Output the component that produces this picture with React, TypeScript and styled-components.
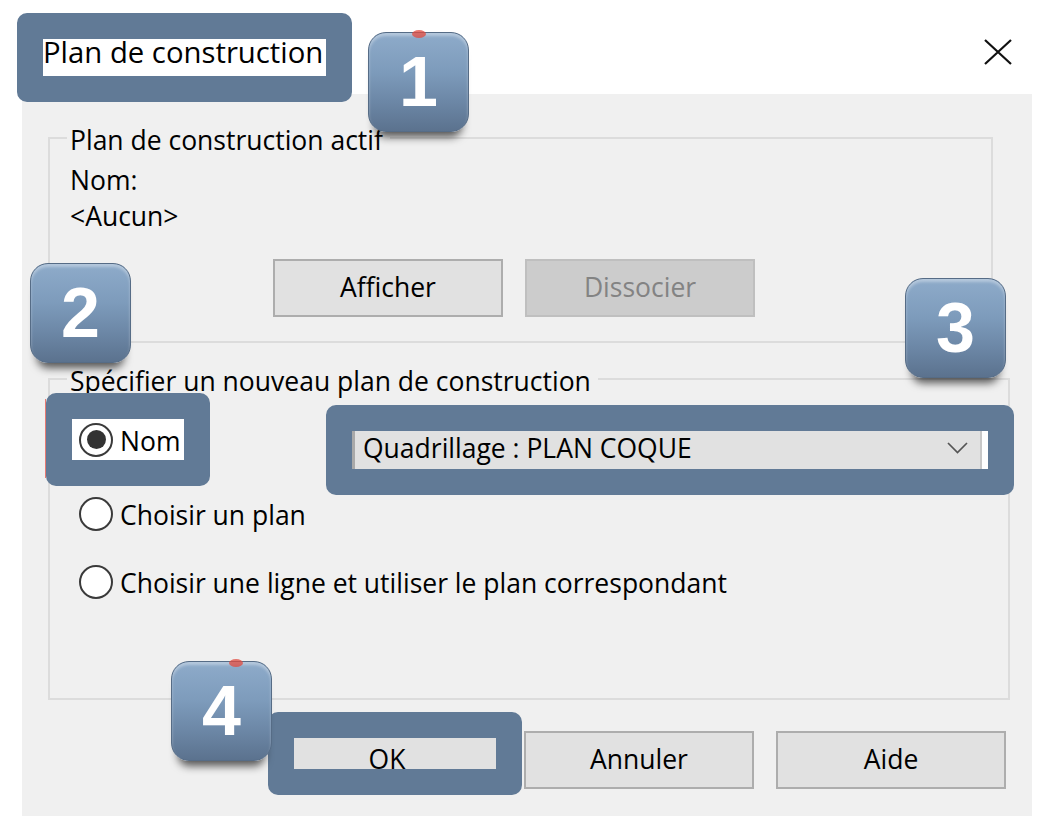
import styled, { createGlobalStyle } from "styled-components";

const GlobalStyle = createGlobalStyle`
  html, body {
    margin: 0;
    padding: 0;
    background: #ffffff;
  }
  * {
    box-sizing: border-box;
  }
`;

const Screen = styled.div`
  position: relative;
  width: 1038px;
  height: 836px;
  overflow: hidden;
  background: #ffffff;
  color: #000000;
  font-family: "Open Sans", "Noto Sans", sans-serif;
  font-size: 26.5px;
`;

const TitleBar = styled.header`
  height: 94px;
  display: flex;
  align-items: flex-start;
  justify-content: space-between;
  padding: 39px 26px 0 43px;
`;

const Spot = styled.div<{ $fill?: string }>`
  position: relative;
  background: ${(p) => p.$fill ?? "transparent"};
`;

// dark annotation frame; the hole in the middle shows the control below
const Callout = styled.span<{ $t?: number; $r?: number; $b?: number; $l?: number; $red?: boolean }>`
  position: absolute;
  top: ${(p) => p.$t ?? -26}px;
  right: ${(p) => p.$r ?? -26}px;
  bottom: ${(p) => p.$b ?? -26}px;
  left: ${(p) => p.$l ?? -26}px;
  border: 26px solid #617a96;
  border-radius: 10px;
  pointer-events: none;
  z-index: 2;
  &::before {
    content: "";
    display: ${(p) => (p.$red ? "block" : "none")};
    position: absolute;
    left: -27px;
    top: -20px;
    bottom: -18px;
    width: 1px;
    background: rgba(226, 70, 60, 0.7);
  }
`;

const TitleText = styled.div`
  margin-top: 1px;
  height: 36px;
  padding: 0 3px 10px 0;
  font-size: 29.3px;
  line-height: 25px;
  white-space: nowrap;
`;

const CloseButton = styled.button`
  width: 28px;
  height: 26px;
  padding: 0;
  border: 0;
  background: none;
  display: flex;
  svg {
    display: block;
  }
`;

const DialogBody = styled.main`
  margin-left: 22px;
  width: 1010px;
  height: 722px;
  background: #f0f0f0;
  padding: 26px 0 0 26px;
  display: flex;
  flex-direction: column;
  align-items: flex-start;
`;

const Group = styled.fieldset<{ $w: number; $h: number; $top: number; $gap?: number }>`
  width: ${(p) => p.$w}px;
  height: ${(p) => p.$h}px;
  margin: ${(p) => p.$gap ?? 0}px 0 0 0;
  min-width: 0;
  border: 2px solid #dcdcdc;
  padding: ${(p) => p.$top}px 20px 0 20px;
  display: flex;
  flex-direction: column;
  align-items: flex-start;
`;

const Legend = styled.legend`
  margin-left: -3px;
  padding: 5px 7px 0 3px;
  font-size: 26.5px;
  line-height: 30px;
  white-space: nowrap;
`;

const TextLine = styled.div`
  line-height: 36px;
  white-space: nowrap;
`;

const ButtonRow = styled.div<{ $indent?: number }>`
  display: flex;
  gap: 22px;
  margin-top: 25px;
  padding-left: ${(p) => p.$indent ?? 0}px;
`;

const Footer = styled.div`
  align-self: stretch;
  display: flex;
  justify-content: flex-end;
  gap: 22px;
  margin-top: 31px;
  padding-right: 26px;
`;

const Button = styled.button`
  width: 230px;
  height: 58px;
  padding: 0 0 3px;
  border: 2px solid #adadad;
  background: #e1e1e1;
  color: #000000;
  font-family: inherit;
  font-size: 26.5px;
  line-height: 36px;
  &:disabled {
    border-color: #bfbfbf;
    background: #cccccc;
    color: #838383;
  }
`;

const OptionRow = styled.div<{ $gap?: number }>`
  display: flex;
  align-items: flex-start;
  margin: ${(p) => p.$gap ?? 0}px 0 0 2px;
`;

const RadioLabel = styled.label<{ $w?: number }>`
  display: flex;
  align-items: center;
  gap: 7px;
  height: 41px;
  width: ${(p) => (p.$w ? `${p.$w}px` : "auto")};
  padding: 0 4px 0 7px;
  white-space: nowrap;
  span {
    margin-top: 3px;
    line-height: 36px;
  }
`;

const RadioDot = styled.i<{ $on?: boolean }>`
  flex: none;
  width: 34px;
  height: 34px;
  border-radius: 50%;
  border: 2.5px solid #3a3a3a;
  background: #ffffff;
  display: flex;
  align-items: center;
  justify-content: center;
  &::after {
    content: "";
    width: 19px;
    height: 19px;
    border-radius: 50%;
    background: ${(p) => (p.$on ? "#333333" : "transparent")};
  }
`;

const ComboHole = styled(Spot)`
  margin: 12px 0 0 168px;
  width: 636px;
  height: 38px;
  padding-right: 6px;
  display: flex;
`;

const Combo = styled.div`
  flex: 1;
  display: flex;
  align-items: center;
  justify-content: space-between;
  background: #e1e1e1;
  border-left: 3px solid #a9a9a9;
  border-right: 2px solid #c8c8c8;
  padding: 0 12px 4px 8px;
  line-height: 34px;
  white-space: nowrap;
`;

const Badge = styled.div<{ $x: number; $y: number; $mark?: number }>`
  position: absolute;
  left: ${(p) => p.$x}px;
  top: ${(p) => p.$y}px;
  width: 101px;
  height: 100px;
  border-radius: 18px;
  border: 1px solid #566c86;
  background: linear-gradient(180deg, #8eabca 0%, #7d9bbb 40%, #6c87a6 70%, #5b728e 100%);
  box-shadow: inset 0 3px 3px rgba(255, 255, 255, 0.35), 0 12px 8px -7px rgba(0, 0, 0, 0.65);
  color: #ffffff;
  font-family: "Liberation Sans", Arial, sans-serif;
  font-weight: bold;
  font-size: 70px;
  line-height: 1;
  display: flex;
  align-items: center;
  justify-content: center;
  z-index: 3;
  &::before {
    content: "";
    display: ${(p) => (p.$mark !== undefined ? "block" : "none")};
    position: absolute;
    left: ${(p) => p.$mark ?? 0}px;
    top: -3px;
    width: 14px;
    height: 8px;
    border-radius: 50%;
    background: rgba(224, 74, 62, 0.75);
    z-index: -1;
  }
`;

const CloseIcon = () => (
  <svg width="28" height="26" viewBox="0 0 28 26">
    <path d="M1 1 L27 25 M27 1 L1 25" stroke="#111" strokeWidth="2.2" fill="none" />
  </svg>
);

const Chevron = () => (
  <svg width="21" height="12" viewBox="0 0 21 12">
    <polyline points="1,1 10.5,10.5 20,1" stroke="#555" strokeWidth="1.7" fill="none" />
  </svg>
);

export default function App() {
  return (
    <Screen>
      <GlobalStyle />
      <TitleBar>
        <Spot $fill="#ffffff">
          <TitleText>Plan de construction</TitleText>
          <Callout />
        </Spot>
        <CloseButton aria-label="Fermer">
          <CloseIcon />
        </CloseButton>
      </TitleBar>

      <DialogBody>
        <Group $w={945} $h={223} $top={7}>
          <Legend>Plan de construction actif</Legend>
          <TextLine>Nom:</TextLine>
          <TextLine>&lt;Aucun&gt;</TextLine>
          <ButtonRow $indent={203}>
            <Button>Afficher</Button>
            <Button disabled>Dissocier</Button>
          </ButtonRow>
        </Group>

        <Group $w={962} $h={339} $top={23} $gap={18}>
          <Legend>Spécifier un nouveau plan de construction</Legend>
          <OptionRow>
            <Spot $fill="#ffffff">
              <RadioLabel $w={112}>
                <RadioDot $on />
                <span>Nom</span>
              </RadioLabel>
              <Callout $red />
            </Spot>
            <ComboHole $fill="#ffffff">
              <Combo>
                <span>Quadrillage : PLAN COQUE</span>
                <Chevron />
              </Combo>
              <Callout />
            </ComboHole>
          </OptionRow>
          <OptionRow $gap={24}>
            <RadioLabel>
              <RadioDot />
              <span>Choisir un plan</span>
            </RadioLabel>
          </OptionRow>
          <OptionRow $gap={27}>
            <RadioLabel>
              <RadioDot />
              <span>Choisir une ligne et utiliser le plan correspondant</span>
            </RadioLabel>
          </OptionRow>
        </Group>

        <Footer>
          <Spot>
            <Button>OK</Button>
            <Callout $t={-19} $r={-20} $b={-6} $l={-4} />
          </Spot>
          <Button>Annuler</Button>
          <Button>Aide</Button>
        </Footer>
      </DialogBody>

      <Badge $x={368} $y={32} $mark={43}>1</Badge>
      <Badge $x={30} $y={263}>2</Badge>
      <Badge $x={905} $y={278}>3</Badge>
      <Badge $x={171} $y={661} $mark={57}>4</Badge>
    </Screen>
  );
}
